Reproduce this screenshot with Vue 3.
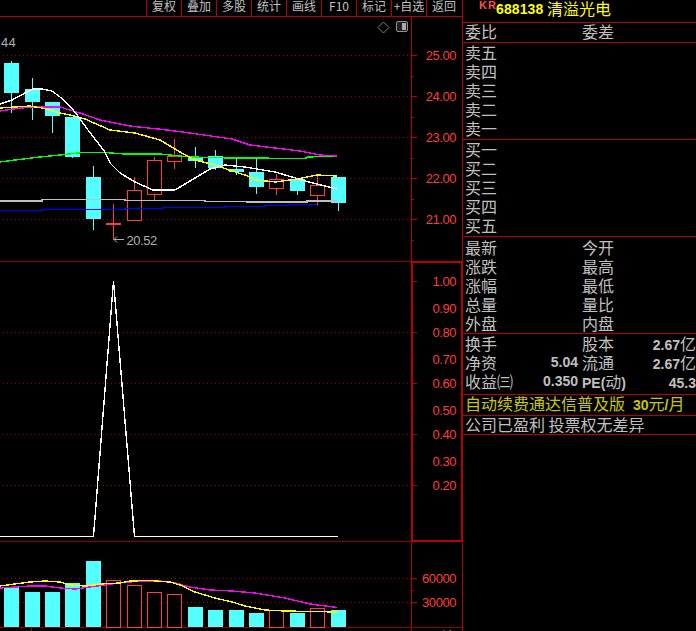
<script setup>
const tools = ['复权', '叠加', '多股', '统计', '画线', 'F10', '标记', '+自选', '返回']

const toPts = (a) => a.map((p) => p.join(',')).join(' ')

const candles = [
  { x: 11.5, o: 63, c: 93, hi: 61, lo: 113, up: false },
  { x: 32.5, o: 89, c: 102, hi: 78, lo: 120, up: false },
  { x: 52.5, o: 102, c: 116, hi: 102, lo: 133, up: false },
  { x: 72.5, o: 117, c: 157, hi: 117, lo: 158, up: false },
  { x: 93.5, o: 177, c: 219, hi: 166, lo: 230, up: false },
  { x: 113.5, o: 223, c: 225, hi: 204, lo: 240, up: true, flat: true },
  { x: 134.5, o: 190.5, c: 220.5, hi: 177, lo: 220, up: true },
  { x: 154.5, o: 160.5, c: 194.5, hi: 157, lo: 200, up: true },
  { x: 174.5, o: 156.5, c: 161.5, hi: 139, lo: 169, up: true },
  { x: 195.5, o: 157, c: 161, hi: 147, lo: 168, up: false },
  { x: 215.5, o: 156, c: 168, hi: 150, lo: 170, up: false },
  { x: 236.5, o: 169, c: 172, hi: 158, lo: 175, up: false },
  { x: 256.5, o: 172, c: 187, hi: 158, lo: 194, up: false },
  { x: 276.5, o: 179.5, c: 188.5, hi: 174, lo: 195, up: true },
  { x: 297.5, o: 179, c: 191, hi: 179, lo: 195, up: false },
  { x: 317.5, o: 185.5, c: 195.5, hi: 175, lo: 205, up: true },
  { x: 338.5, o: 177, c: 203, hi: 177, lo: 211, up: false },
]

const lines = [
  { color: '#00ff00', pts: [[0,162],[15,160],[40,157],[60,155],[83,152.5],[105,152.5],[125,154],[160,154],[190,157],[232,158],[245,158],[305,158.5],[308,157],[337,156]] },
  { color: '#ff00ff', pts: [[0,111],[20,108],[40,107],[60,107],[80,113],[100,120],[130,126],[167,130],[190,133],[232,139],[250,145],[275,148],[300,151],[320,155],[337,156]] },
  { color: '#ffff00', pts: [[0,108],[30,106],[35,107],[42,108],[60,113],[70,115],[85,119],[110,130],[135,133],[160,140],[180,152],[195,160],[215,165],[232,171],[245,175],[256,180],[276,182],[297,179],[317,175],[337,176]] },
  { color: '#ffffff', pts: [[0,104],[12,100],[25,93],[33,89],[42,89],[52,91],[60,97],[70,106],[78,116],[88,130],[105,152],[110,163],[120,173],[135,182],[153,190],[175,190],[195,178],[210,169],[225,165],[245,167],[275,172],[292,177],[309,182],[337,189]] },
  { color: '#c0c0c0', pts: [[0,201],[42,201],[42,199.5],[125,199.5],[125,200.5],[205,200.5],[205,201.5],[247,201.5],[247,202],[307,202],[307,201],[337,201]] },
  { color: '#0000ff', pts: [[0,210.5],[42,210.5],[42,209.5],[125,209.5],[125,208.5],[163,208.5],[163,207.5],[225,207.5],[225,206.5],[265,206.5],[265,205.5],[288,205.5],[288,204.5],[317,204.5]] },
].map((l) => ({ ...l, d: toPts(l.pts) }))

const priceAxis = [
  { y: 55.5, t: '25.00' }, { y: 96.5, t: '24.00' }, { y: 137.5, t: '23.00' },
  { y: 178.5, t: '22.00' }, { y: 219.5, t: '21.00' },
]
const priceMinor = [76, 117, 158, 199, 240]

const ratioAxis = [
  { y: 281.5, t: '1.00', major: true, off: 4.5 }, { y: 307.5, t: '0.90', off: 5 },
  { y: 332.5, t: '0.80', major: true, off: 4.5 }, { y: 358.5, t: '0.70', off: 5 },
  { y: 383.5, t: '0.60', major: true, off: 4.5 }, { y: 409.5, t: '0.50', off: 5 },
  { y: 434.5, t: '0.40', major: true, off: 4.5 }, { y: 460.5, t: '0.30', off: 5 },
  { y: 485.5, t: '0.20', major: true, off: 4.5 },
]
const ratioDots = [332.5, 383.5, 434.5, 485.5]

const spike = toPts([[0,536.5],[93.5,536.5],[113.5,281],[134.5,536.5],[338,536.5]])

const vols = [587, 592, 592, 583, 561, 580, 585, 592, 594, 607, 610, 610, 613, 610, 613, 608, 610]
const volBars = candles.map((c, i) => ({ x: c.x, top: vols[i], up: c.up }))

const volYellow = toPts([[0,586],[15,584],[30,582],[45,581],[60,582],[70,585],[85,586],[100,584],[120,583],[130,581],[150,580.5],[170,582],[180,585],[195,592],[215,598],[232,602],[245,606],[265,610],[285,611],[337,612]])
const volMagenta = toPts([[0,588],[15,587],[30,586],[45,586],[60,588],[75,589],[90,587],[105,585],[125,582],[160,581],[175,583],[190,587],[210,590],[232,591],[255,593],[285,598],[310,604],[337,607.5]])

const sells = ['卖五', '卖四', '卖三', '卖二', '卖一']
const buys = ['买一', '买二', '买三', '买四', '买五']
const quotes = [['最新', '今开'], ['涨跌', '最高'], ['涨幅', '最低'], ['总量', '量比'], ['外盘', '内盘']]
const finance = [
  { a: '换手', v: '', b: '股本', n: '2.67', u: '亿' },
  { a: '净资', v: '5.04', b: '流通', n: '2.67', u: '亿' },
  { a: '收益㈢', v: '0.350', pe: true, n: '45.3', u: '' },
]
</script>

<template>
  <div class="screen">
    <div class="left">
      <div class="toolbar">
        <span v-for="t in tools" :key="t" class="tool">{{ t }}</span>
      </div>
      <svg class="chart" width="462" height="615" viewBox="0 16 462 615">
        <!-- frames -->
        <line x1="411.5" y1="16" x2="411.5" y2="631" class="frame" />
        <line x1="0" y1="261.5" x2="462" y2="261.5" class="frame-dark" />
        <line x1="0" y1="541.5" x2="462" y2="541.5" class="frame-dark" />
        <line x1="0" y1="627.5" x2="462" y2="627.5" class="frame-dark" />
        <rect x="412" y="262" width="50" height="279" class="box" />
        <line x1="31.5" y1="628" x2="31.5" y2="631" class="frame" />
        <text x="425" y="644" class="cut">量比</text>

        <!-- price pane -->
        <g v-for="a in priceAxis" :key="a.t">
          <line x1="3" :y1="a.y" x2="409" :y2="a.y" class="dots" />
          <line x1="411" :y1="a.y" x2="417" :y2="a.y" class="frame" />
          <text x="456" :y="a.y + 4.5" text-anchor="end" class="axis">{{ a.t }}</text>
        </g>
        <line v-for="y in priceMinor" :key="y" x1="411" :y1="y + 0.5" x2="414" :y2="y + 0.5" class="frame" />

        <text x="1" y="47" class="note wide">44</text>
        <path d="M383.5 22 L389 27.5 L383.5 33 L378 27.5 Z" class="outline" />
        <rect x="396.5" y="21.5" width="11" height="10" rx="1.5" class="toggle" />
        <rect x="402" y="23" width="4" height="7" fill="#a8a8a8" />

        <g v-for="c in candles" :key="c.x">
          <line :x1="c.x" :y1="c.hi" :x2="c.x" :y2="c.lo" :class="c.up ? 'wick-up' : 'wick-down'" />
          <rect v-if="c.flat" :x="c.x - 7.5" :y="c.o" width="15" :height="c.c - c.o" class="flat" />
          <rect v-else-if="c.up" :x="c.x - 7" :y="c.o" width="14" :height="c.c - c.o" class="body-up" />
          <rect v-else :x="c.x - 7.5" :y="c.o" width="15" :height="c.c - c.o" class="body-down" />
        </g>
        <polyline v-for="l in lines" :key="l.color" :points="l.d" :stroke="l.color" class="ma" />

        <path d="M124 239.5 H114 M117 236.5 L114 239.5 L117 242.5" class="arrow" />
        <text x="126.5" y="245" class="note">20.52</text>

        <!-- ratio pane -->
        <line v-for="y in ratioDots" :key="y" x1="3" :y1="y" x2="409" :y2="y" class="dots" />
        <polyline :points="spike" class="spike" />
        <g v-for="a in ratioAxis" :key="a.t">
          <line x1="411" :y1="a.y" :x2="a.major ? 417 : 414" :y2="a.y" class="frame" />
          <text x="456" :y="a.y + a.off" text-anchor="end" class="axis">{{ a.t }}</text>
        </g>

        <!-- volume pane -->
        <line x1="3" y1="578.5" x2="409" y2="578.5" class="dots" />
        <line x1="3" y1="602.5" x2="409" y2="602.5" class="dots" />
        <g v-for="b in volBars" :key="b.x">
          <rect v-if="b.up" :x="b.x - 7" :y="b.top + 0.5" width="14" :height="626.5 - b.top" class="body-up" />
          <rect v-else :x="b.x - 7.5" :y="b.top" width="15" :height="627 - b.top" class="body-down" />
        </g>
        <polyline :points="volMagenta" stroke="#ff00ff" class="ma" />
        <polyline :points="volYellow" stroke="#ffff00" class="ma" />
        <line x1="411" y1="578.5" x2="417" y2="578.5" class="frame" />
        <line x1="411" y1="590.5" x2="414" y2="590.5" class="frame" />
        <line x1="411" y1="602.5" x2="417" y2="602.5" class="frame" />
        <text x="456" y="583" text-anchor="end" class="axis">60000</text>
        <text x="456" y="607" text-anchor="end" class="axis">30000</text>
      </svg>
    </div>

    <div class="panel">
      <div class="title">
        <span class="kr">KR</span><span class="code">688138</span><span class="name">清溢光电</span>
      </div>
      <div class="section single">
        <div class="row"><span>委比</span><span>委差</span></div>
      </div>
      <div class="section book">
        <div v-for="s in sells" :key="s" class="row"><span>{{ s }}</span></div>
      </div>
      <div class="section book">
        <div v-for="b in buys" :key="b" class="row"><span>{{ b }}</span></div>
      </div>
      <div class="section book quote">
        <div v-for="q in quotes" :key="q[0]" class="row"><span>{{ q[0] }}</span><span>{{ q[1] }}</span></div>
      </div>
      <div class="section fin">
        <div v-for="f in finance" :key="f.a" class="frow">
          <span>{{ f.a }}</span><b class="num">{{ f.v }}</b>
          <span v-if="f.pe" class="second"><b class="latin">PE(</b>动<b class="latin">)</b></span>
          <span v-else class="second">{{ f.b }}</span>
          <span class="end"><b class="latin">{{ f.n }}</b>{{ f.u }}</span>
        </div>
      </div>
      <div class="section ad">自动续费通达信普及版<span class="price"><b>30</b>元<b>/</b>月</span></div>
      <div class="section note-row">公司已盈利 投票权无差异</div>
    </div>
  </div>
</template>

<style scoped>
.screen {
  width: 696px;
  height: 631px;
  background: #000;
  display: flex;
  overflow: hidden;
  font-family: "Noto Sans CJK SC", "Liberation Sans", sans-serif;
  color: #c0c0c0;
}
.left {
  width: 462px;
  flex: none;
  display: flex;
  flex-direction: column;
}
.toolbar {
  height: 16px;
  flex: none;
  display: flex;
  justify-content: flex-end;
  border-bottom: 1px solid #b80000;
  margin-bottom: -1px;
  padding-right: 1px;
}
.tool {
  width: 35px;
  flex: none;
  box-sizing: border-box;
  border-left: 1px solid #b80000;
  font-size: 12px;
  line-height: 12px;
  text-align: center;
  letter-spacing: 0;
  color: #c0c0c0;
  overflow: hidden;
  white-space: nowrap;
}
.chart {
  display: block;
  flex: none;
}
.frame { stroke: #b80000; stroke-width: 1; shape-rendering: crispEdges; }
.frame-dark { stroke: #8c0000; stroke-width: 1; shape-rendering: crispEdges; }
.box { fill: none; stroke: #b80000; stroke-width: 2; shape-rendering: crispEdges; }
.dots { stroke: #980000; stroke-width: 1; stroke-dasharray: 1 3; shape-rendering: crispEdges; }
.axis {
  font-family: "Liberation Sans", sans-serif;
  font-size: 13px;
  letter-spacing: -0.45px;
  fill: #ff3c3c;
}
.note {
  font-family: "Liberation Sans", sans-serif;
  font-size: 13px;
  letter-spacing: -0.45px;
  fill: #b0b0b0;
}
.wide { letter-spacing: 0.2px; }
.cut { font-size: 16px; fill: #c0c0c0; }
.outline { fill: none; stroke: #808080; stroke-width: 1; }
.toggle { fill: #202020; stroke: #909090; stroke-width: 1; }
.wick-up { stroke: #ff3c3c; stroke-width: 1; shape-rendering: crispEdges; }
.wick-down { stroke: #54ffff; stroke-width: 1; shape-rendering: crispEdges; }
.body-up { fill: #000; stroke: #ff3c3c; stroke-width: 1; shape-rendering: crispEdges; }
.body-down { fill: #54ffff; shape-rendering: crispEdges; }
.flat { fill: #ff3c3c; shape-rendering: crispEdges; }
.ma { fill: none; stroke-width: 1.4; shape-rendering: crispEdges; }
.arrow { fill: none; stroke: #b0b0b0; stroke-width: 1; }
.spike { fill: none; stroke: #fff; stroke-width: 1.4; shape-rendering: crispEdges; }

.panel {
  flex: 1;
  min-width: 0;
  border-left: 1px solid #b80000;
  font-size: 16px;
  line-height: 19px;
}
.title {
  height: 22px;
  display: flex;
  align-items: flex-start;
  color: #ffff00;
  padding-left: 16px;
  white-space: nowrap;
}
.kr {
  font: bold 11px/11px "Liberation Sans", sans-serif;
  color: #ff4c4c;
  width: 17px;
  letter-spacing: 1px;
}
.code {
  font: bold 14px/18px "Liberation Sans", sans-serif;
  width: 51px;
  letter-spacing: 0.1px;
}
.name { line-height: 17px; }
.section {
  border-top: 1px solid #b80000;
  padding-left: 2px;
  box-sizing: border-box;
}
.single { height: 20px; line-height: 17px; }
.book { height: 97px; }
.quote { padding-top: 1px; }
.row {
  display: grid;
  grid-template-columns: 117px 1fr;
  height: 19px;
}
.single .row { height: 17px; }
.fin { height: 61px; }
.frow {
  display: grid;
  grid-template-columns: 48px 65px 41px 1fr;
  height: 19px;
  white-space: nowrap;
}
.second { padding-left: 4px; }
.latin { font: bold 14px/19px "Liberation Sans", sans-serif; }
.num {
  font: bold 14px/19px "Liberation Sans", sans-serif;
  text-align: right;
}
.end { text-align: right; }
.ad {
  height: 21px;
  color: #c8c800;
  line-height: 17px;
  white-space: nowrap;
}
.price { margin-left: 8px; }
.price b { font: bold 14px/17px "Liberation Sans", sans-serif; }
.note-row {
  height: 20px;
  line-height: 16px;
  white-space: nowrap;
  border-bottom: 1px solid #b80000;
}
</style>

<style>
html, body { background: #000; }
</style>
